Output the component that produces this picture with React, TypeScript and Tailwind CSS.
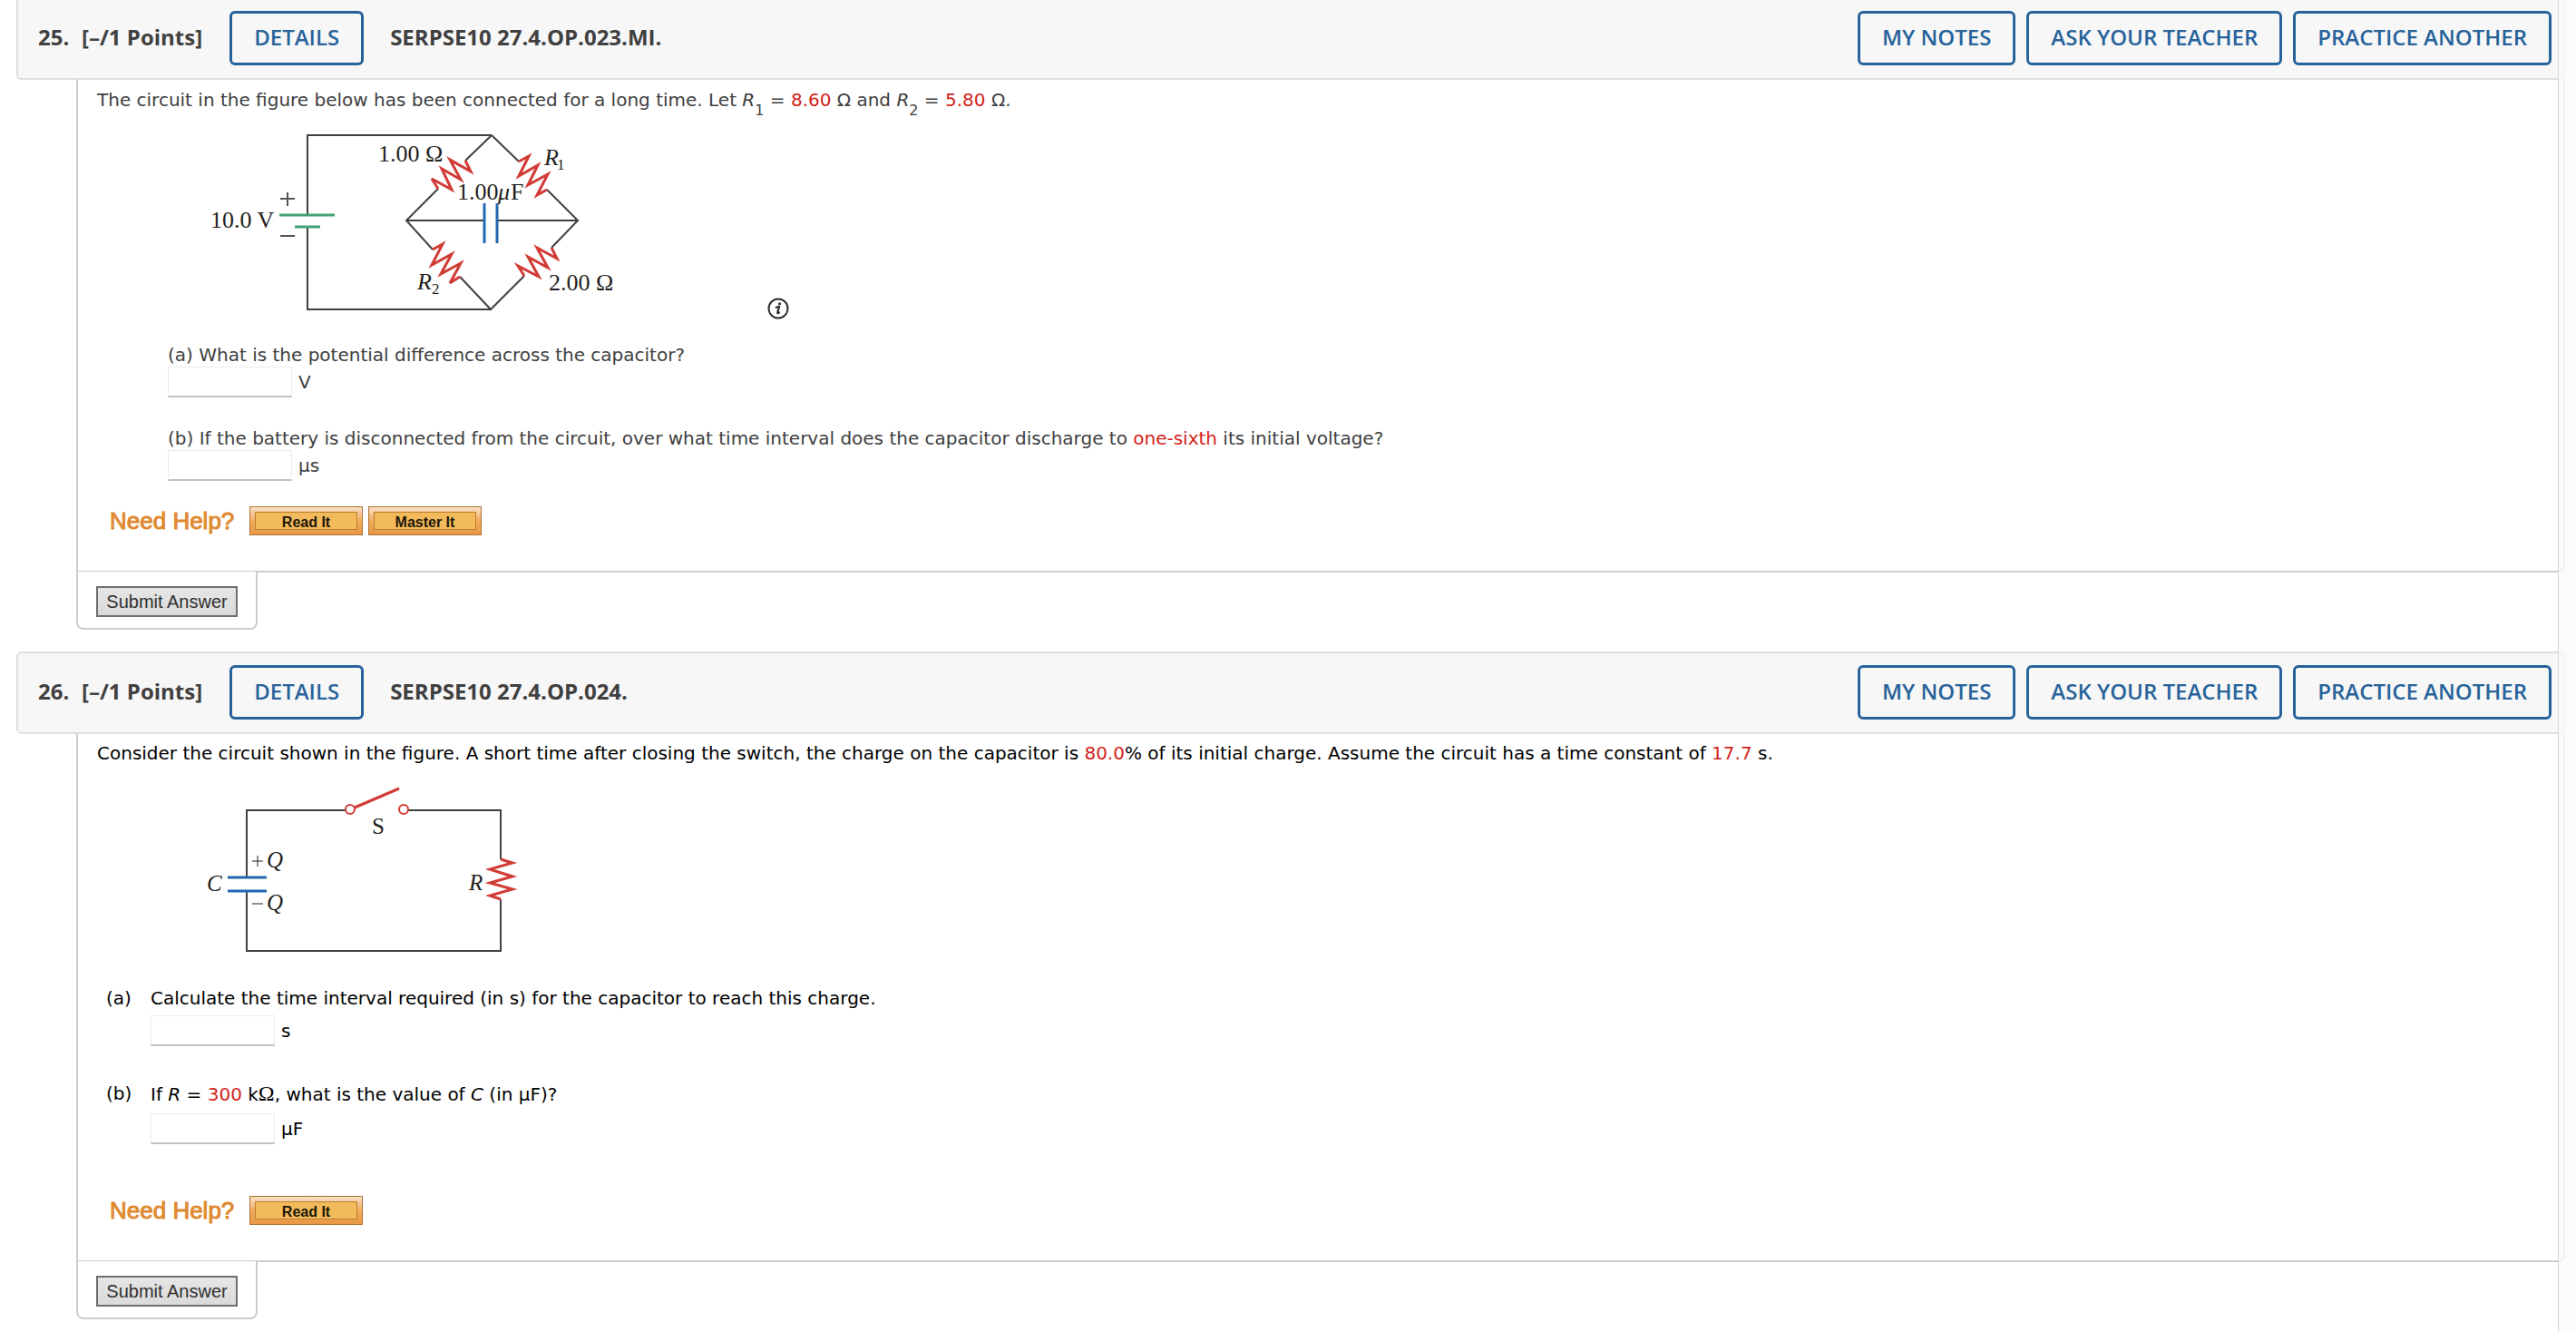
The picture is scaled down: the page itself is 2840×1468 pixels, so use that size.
import type { ReactNode } from 'react';

const Red = ({ children }: { children: ReactNode }) => (
  <span className="text-[#d2231a]">{children}</span>
);

function ActionButton({ children }: { children: ReactNode }) {
  return (
    <button
      type="button"
      className="h-[60px] px-6 rounded-md border-3 border-[#27639a] text-[#27639a] text-2xl leading-8 pb-0.5 font-semibold whitespace-nowrap"
    >
      {children}
    </button>
  );
}

function HelpButton({ children }: { children: ReactNode }) {
  return (
    <button
      type="button"
      className="h-8 w-[125px] p-[5px] border border-[#ab7434] bg-linear-to-b from-[#fbe0c4] via-[#f0ab5c] to-[#ea9743]"
    >
      <span className="flex h-full items-center justify-center border border-[#b98032] bg-[#f2ba5a] pt-1 font-['Liberation_Sans',Arial,sans-serif] text-base leading-none font-bold text-[#1c1609]">
        {children}
      </span>
    </button>
  );
}

function NeedHelp({ options }: { options: string[] }) {
  return (
    <div className="flex items-center ml-3.5">
      <span className="w-[154px] font-['Liberation_Sans',Arial,sans-serif] text-[26px] leading-8 text-[#df8a32] [-webkit-text-stroke:1px_#df8a32] whitespace-nowrap">
        Need Help?
      </span>
      <div className="flex gap-1.5">
        {options.map((option) => (
          <HelpButton key={option}>{option}</HelpButton>
        ))}
      </div>
    </div>
  );
}

function AnswerField({ id, label, unit }: { id: string; label: string; unit: string }) {
  return (
    <div className="flex h-9 items-center gap-[7px]">
      <input
        id={id}
        type="text"
        aria-label={label}
        className="h-[34px] w-[137px] border border-[#ebebeb] border-b-2 border-b-[#c2c2c2] bg-white px-2 outline-none"
      />
      <label htmlFor={id}>{unit}</label>
    </div>
  );
}

type QuestionProps = {
  number: number;
  code: string;
  first?: boolean;
  children: ReactNode;
};

function Question({ number, code, first = false, children }: QuestionProps) {
  return (
    <section className="mb-6">
      <header
        className={
          first
            ? "flex items-center justify-between rounded-b-md border-2 border-t-0 border-[#dedede] bg-[#f7f7f7] pt-3 pb-3.5 pl-[22px] pr-[13px] font-['Open_Sans',sans-serif]"
            : "flex items-center justify-between rounded-md border-2 border-[#dedede] bg-[#f7f7f7] pt-[13px] pb-3.5 pl-[22px] pr-[13px] font-['Open_Sans',sans-serif]"
        }
      >
        <div className="flex items-center text-2xl leading-8 font-bold text-[#404040] whitespace-nowrap">
          <span className="w-12 pb-0.5">{number}.</span>
          <span className="mr-[30px] pb-0.5">[–/1 Points]</span>
          <ActionButton>DETAILS</ActionButton>
          <h2 className="ml-[29px] pb-0.5">{code}</h2>
        </div>
        <div className="flex gap-3">
          <ActionButton>MY NOTES</ActionButton>
          <ActionButton>ASK YOUR TEACHER</ActionButton>
          <ActionButton>PRACTICE ANOTHER</ActionButton>
        </div>
      </header>

      <div className="ml-[66px]">
        <div className="rounded-br-lg border-2 border-t-0 border-[#cccccc] px-[21px] pb-[39px] font-['DejaVu_Sans',Verdana,sans-serif] text-xl leading-6">
          {children}
        </div>
        <div className="-mt-px w-[200px] rounded-b-lg border-2 border-t-0 border-[#cccccc] bg-white pt-4 pb-3 pl-5">
          <button
            type="button"
            className="block h-[34px] w-[156px] border-2 border-[#6f6f6f] bg-linear-to-b from-[#e6e6e6] to-[#dadada] font-['Liberation_Sans',Arial,sans-serif] text-xl leading-none text-[#303030] whitespace-nowrap"
          >
            Submit Answer
          </button>
        </div>
      </div>
    </section>
  );
}

function BridgeCircuit() {
  return (
    <svg
      width="640"
      height="214"
      viewBox="187 138 640 214"
      fill="none"
      className="font-['Liberation_Serif','Times_New_Roman',serif]"
      role="img"
      aria-label="Bridge circuit"
    >
      <g stroke="#404040" strokeWidth="2">
        <path d="M339 237V149H542M339 250V341H541" />
        <path d="M542 149L513 177M483 208L448 243L477 275M507 305L541 341L578 304M608 273L637 243L603 209M572 178L542 149" />
        <path d="M448 243H534M548 243H637" />
      </g>
      <g stroke="#d13b36" strokeWidth="3">
        <path d="M513 177L519 189L496 176L508 198L487 186L498 209L476 197L483 208" />
        <path d="M572 178L583 172L572 194L593 182L582 204L604 192L592 215L603 209" />
        <path d="M477 275L488 269L476 292L498 280L486 302L508 290L496 312L507 305" />
        <path d="M608 273L614 285L592 273L604 295L582 283L594 305L571 293L578 304" />
      </g>
      <path d="M534 224V268M548 224V268" stroke="#2368b0" strokeWidth="3" />
      <path d="M308 237H369M325 250H353" stroke="#43a377" strokeWidth="3" />
      <path d="M309 219H325M317 212V227M309 260H325" stroke="#555555" strokeWidth="2" />
      <g fill="#231f20" fontSize="26">
        <text x="232" y="251">10.0 V</text>
        <text x="417" y="178">1.00 Ω</text>
        <text x="504" y="220">1.00</text>
        <text x="549" y="220" fontStyle="italic">μ</text>
        <text x="563" y="220">F</text>
        <text x="600" y="182" fontStyle="italic">R</text>
        <text x="614" y="187" fontSize="17">1</text>
        <text x="460" y="319" fontStyle="italic">R</text>
        <text x="476" y="324" fontSize="17">2</text>
        <text x="605" y="320">2.00 Ω</text>
      </g>
    </svg>
  );
}

function SwitchCircuit() {
  return (
    <svg
      width="380"
      height="190"
      viewBox="222 866 380 190"
      fill="none"
      className="font-['Liberation_Serif','Times_New_Roman',serif]"
      role="img"
      aria-label="Capacitor, switch and resistor in a loop"
    >
      <path
        d="M272 967V893H381M450 893H552V947M552 991V1048H272V982"
        stroke="#404040"
        strokeWidth="2"
      />
      <g stroke="#d13b36" strokeWidth="2">
        <circle cx="386" cy="892" r="5" />
        <circle cx="445" cy="892" r="5" />
        <path d="M391 890L440 869" strokeWidth="3" />
        <path
          d="M552 947L565 951L540 958L565 966L540 973L565 980L540 987L552 991"
          strokeWidth="3"
        />
      </g>
      <path d="M251 967H294M251 982H294" stroke="#2368b0" strokeWidth="3" />
      <path d="M278 949H290M284 943V955M278 996H290" stroke="#231f20" strokeWidth="1" />
      <g fill="#231f20" fontSize="25">
        <text x="410" y="919">S</text>
        <text x="294" y="956" fontStyle="italic">Q</text>
        <text x="294" y="1003" fontStyle="italic">Q</text>
        <text x="228" y="982" fontStyle="italic">C</text>
        <text x="517" y="981" fontStyle="italic">R</text>
      </g>
    </svg>
  );
}

function InfoButton() {
  return (
    <button type="button" aria-label="Figure details" className="ml-[19px]">
      <svg width="24" height="24" viewBox="0 0 24 24" fill="none">
        <circle cx="12" cy="12" r="10.5" stroke="#303030" strokeWidth="2" />
        <circle cx="13.5" cy="6.8" r="1.6" fill="#303030" />
        <path
          d="M9 11.2C10.4 10.4 11.6 10 13 10L11.2 16.4C11 17.6 12 17.2 13.6 15.8"
          stroke="#303030"
          strokeWidth="2.2"
        />
      </svg>
    </button>
  );
}

export default function App() {
  return (
    <div className="relative min-h-screen overflow-hidden bg-white">
      <main className="ml-[18px] mr-3">
        <Question number={25} code="SERPSE10 27.4.OP.023.MI." first>
          <div className="pt-2.5 text-[#404040]">
            <p>
              The circuit in the figure below has been connected for a long time. Let <i>R</i>
              <sub className="-bottom-2.5 text-base leading-none">1</sub> = <Red>8.60</Red> Ω and <i>R</i>
              <sub className="-bottom-2.5 text-base leading-none">2</sub> = <Red>5.80</Red> Ω.
            </p>
            <div className="ml-20 mt-4 flex items-end">
              <BridgeCircuit />
              <InfoButton />
            </div>
            <div className="ml-[78px] mt-[27px]">
              <p>(a) What is the potential difference across the capacitor?</p>
              <AnswerField id="q25a" label="Potential difference" unit="V" />
            </div>
            <div className="ml-[78px] mt-8 mb-[27px]">
              <p>
                (b) If the battery is disconnected from the circuit, over what time interval does the
                capacitor discharge to <Red>one-sixth</Red> its initial voltage?
              </p>
              <AnswerField id="q25b" label="Time interval" unit="µs" />
            </div>
            <NeedHelp options={['Read It', 'Master It']} />
          </div>
        </Question>

        <Question number={26} code="SERPSE10 27.4.OP.024.">
          <div className="pt-[9px] text-black">
            <p>
              Consider the circuit shown in the figure. A short time after closing the switch, the
              charge on the capacitor is <Red>80.0</Red>% of its initial charge. Assume the circuit has
              a time constant of <Red>17.7</Red> s.
            </p>
            <div className="ml-[115px] mt-6 flex">
              <SwitchCircuit />
            </div>
            <div className="ml-2.5 mt-8 flex">
              <span className="w-[49px]">(a)</span>
              <div className="flex flex-col gap-1.5">
                <p>
                  Calculate the time interval required (in s) for the capacitor to reach this charge.
                </p>
                <AnswerField id="q26a" label="Time interval in seconds" unit="s" />
              </div>
            </div>
            <div className="ml-2.5 mt-[39px] mb-14 flex">
              <span className="w-[49px]">(b)</span>
              <div className="flex flex-col gap-2">
                <p>
                  If <i>R</i> = <Red>300</Red> k
                  <span className="font-['Liberation_Serif',serif] text-2xl leading-none">Ω</span>,
                  what is the value of <i>C</i> (in µF)?
                </p>
                <AnswerField id="q26b" label="Capacitance" unit="µF" />
              </div>
            </div>
            <NeedHelp options={['Read It']} />
          </div>
        </Question>
      </main>

      {/* translucent side rail over the right edge */}
      <div className="pointer-events-none absolute inset-y-0 right-0 w-5 border-l border-[#d8d8d8] bg-[#fafafa]/75" />
    </div>
  );
}
